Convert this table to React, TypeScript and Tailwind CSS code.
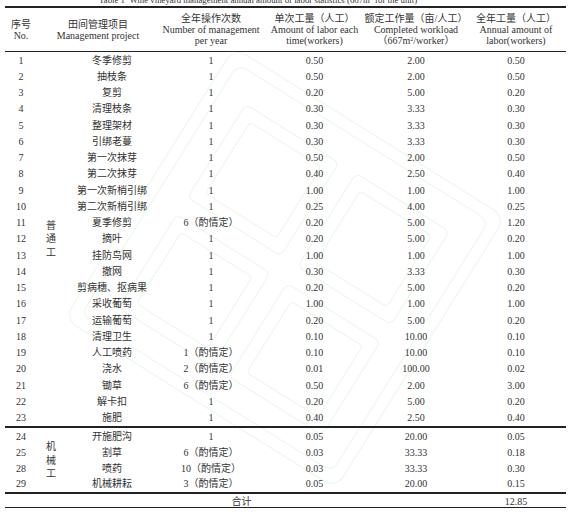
import React from "react";

type Row = [string, string, string, string, string, string];

const part1: Row[] = [
  ["1", "冬季修剪", "1", "0.50", "2.00", "0.50"],
  ["2", "抽枝条", "1", "0.50", "2.00", "0.50"],
  ["3", "复剪", "1", "0.20", "5.00", "0.20"],
  ["4", "清理枝条", "1", "0.30", "3.33", "0.30"],
  ["5", "整理架材", "1", "0.30", "3.33", "0.30"],
  ["6", "引绑老蔓", "1", "0.30", "3.33", "0.30"],
  ["7", "第一次抹芽", "1", "0.50", "2.00", "0.50"],
  ["8", "第二次抹芽", "1", "0.40", "2.50", "0.40"],
  ["9", "第一次新梢引绑", "1", "1.00", "1.00", "1.00"],
  ["10", "第二次新梢引绑", "1", "0.25", "4.00", "0.25"],
  ["11", "夏季修剪", "6（酌情定）", "0.20", "5.00", "1.20"],
  ["12", "摘叶", "1", "0.20", "5.00", "0.20"],
  ["13", "挂防鸟网", "1", "1.00", "1.00", "1.00"],
  ["14", "撤网", "1", "0.30", "3.33", "0.30"],
  ["15", "剪病穗、抠病果", "1", "0.20", "5.00", "0.20"],
  ["16", "采收葡萄", "1", "1.00", "1.00", "1.00"],
  ["17", "运输葡萄", "1", "0.20", "5.00", "0.20"],
  ["18", "清理卫生", "1", "0.10", "10.00", "0.10"],
  ["19", "人工喷药", "1（酌情定）", "0.10", "10.00", "0.10"],
  ["20", "浇水", "2（酌情定）", "0.01", "100.00", "0.02"],
  ["21", "锄草", "6（酌情定）", "0.50", "2.00", "3.00"],
  ["22", "解卡扣", "1", "0.20", "5.00", "0.20"],
  ["23", "施肥", "1", "0.40", "2.50", "0.40"],
];

const part2: Row[] = [
  ["24", "开施肥沟", "1", "0.05", "20.00", "0.05"],
  ["25", "割草", "6（酌情定）", "0.03", "33.33", "0.18"],
  ["28", "喷药", "10（酌情定）", "0.03", "33.33", "0.30"],
  ["29", "机械耕耘", "3（酌情定）", "0.05", "20.00", "0.15"],
];

const font = {
  fontFamily: '"Liberation Serif", "Noto Sans CJK SC", serif',
};

function Section({
  rows,
  category,
  rowClass,
}: {
  rows: Row[];
  category: string;
  rowClass: string;
}) {
  return (
    <div className="grid grid-cols-[32px_28px_94px_104px_103px_100px_100px]">
      {rows.map((r, i) => (
        <React.Fragment key={r[0]}>
          {r.map((v, j) => (
            <div
              key={j}
              className={`${rowClass} flex items-center justify-center whitespace-nowrap`}
              style={{ gridColumn: j === 0 ? 1 : j + 2, gridRow: i + 1 }}
            >
              {v}
            </div>
          ))}
        </React.Fragment>
      ))}
      <div
        className="flex flex-col items-center justify-center leading-[13.5px]"
        style={{ gridColumn: 2, gridRow: `1 / span ${rows.length}` }}
      >
        {category.split("").map((c, i) => (
          <span key={i}>{c}</span>
        ))}
      </div>
    </div>
  );
}

function HeaderCell({ lines, className = "" }: { lines: React.ReactNode[]; className?: string }) {
  return (
    <div className={`flex flex-col items-center justify-center leading-[11px] ${className}`}>
      {lines.map((l, i) => (
        <span key={i} className="whitespace-nowrap">
          {l}
        </span>
      ))}
    </div>
  );
}

export default function App() {
  return (
    <div
      className="relative w-[586px] h-[512px] bg-white overflow-hidden text-[10px] text-[#333] pl-[5px]"
      style={font}
    >
      <svg
        className="absolute left-0 top-0 pointer-events-none"
        width="586"
        height="512"
        viewBox="0 0 586 512"
      >
        <g
          transform="rotate(32 285 268)"
          fill="none"
          stroke="#dcf2dc"
          strokeWidth="1.1"
          opacity="0.55"
        >
          <rect x="125" y="108" width="320" height="320" rx="14" />
          <rect x="137" y="120" width="296" height="296" rx="10" />
          <rect x="165" y="150" width="110" height="110" rx="6" />
          <rect x="178" y="163" width="84" height="84" rx="4" />
          <rect x="295" y="150" width="110" height="110" rx="6" />
          <rect x="308" y="163" width="84" height="84" rx="4" />
          <rect x="165" y="280" width="110" height="110" rx="6" />
          <rect x="178" y="293" width="84" height="84" rx="4" />
          <rect x="295" y="280" width="110" height="110" rx="6" />
          <rect x="308" y="293" width="84" height="84" rx="4" />
        </g>
      </svg>
      <div className="relative">
        <div className="h-[6px] overflow-hidden relative">
          <div className="absolute left-[94px] top-[-4px] text-[8.8px] leading-[9px] whitespace-nowrap text-[#333]">
            Table 1&nbsp;&nbsp;Wine vineyard management annual amount of labor statistics (667m
            <sup className="text-[6px]">2</sup> for the unit)
          </div>
        </div>
        <div className="w-[561px] border-t-2 border-[#222]">
          <div className="grid grid-cols-[32px_28px_94px_104px_103px_100px_100px] h-[44px] border-b border-[#222]">
            <HeaderCell lines={["序号", "No."]} />
            <HeaderCell lines={["田间管理项目", "Management project"]} className="col-span-2" />
            <HeaderCell lines={["全年操作次数", "Number of management", "per year"]} />
            <HeaderCell lines={["单次工量（人工）", "Amount of labor each", "time(workers)"]} />
            <HeaderCell
              lines={[
                "额定工作量（亩/人工）",
                "Completed workload",
                <>
                  （667m<sup className="text-[6px]">2</sup>/worker）
                </>,
              ]}
            />
            <HeaderCell lines={["全年工量（人工）", "Annual amount of", "labor(workers)"]} />
          </div>
          <Section rows={part1} category="普通工" rowClass="h-[16.25px]" />
          <div className="h-[2px] bg-[#222]" />
          <div className="pt-[1px]">
            <Section rows={part2} category="机械工" rowClass="h-[15.75px]" />
          </div>
          <div className="h-[2px] bg-[#222]" />
          <div className="grid grid-cols-[361px_100px_100px] h-[14px] border-b border-[#222]">
            <div className="flex items-center justify-center pl-[112px]">合计</div>
            <div />
            <div className="flex items-center justify-center">12.85</div>
          </div>
        </div>
      </div>
    </div>
  );
}
